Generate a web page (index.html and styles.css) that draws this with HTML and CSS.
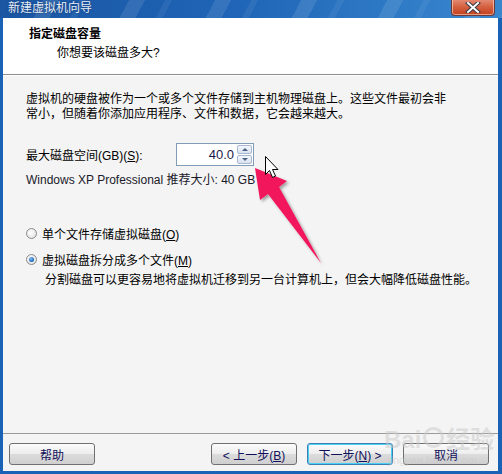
FILE: index.html
```html
<!DOCTYPE html>
<html lang="zh-CN">
<head>
    <meta charset="UTF-8">
    <title>新建虚拟机向导</title>
    <link rel="stylesheet" href="styles.css">
</head>
<body>
    <div class="window">
        <!-- Title bar -->
        <div class="titlebar">
            <span class="title">新建虚拟机向导</span>
            <span class="close">
                <svg width="16" height="11" viewBox="0 0 16 11">
                    <path d="M3 1 L13 10 M13 1 L3 10" stroke="#3a3a4a" stroke-width="4" stroke-linecap="square"/>
                    <path d="M3 1 L13 10 M13 1 L3 10" stroke="#fff" stroke-width="2" stroke-linecap="square"/>
                </svg>
            </span>
        </div>

        <div class="frame">
            <div class="header">
                <div class="header-title">指定磁盘容量</div>
                <div class="header-sub">你想要该磁盘多大?</div>
            </div>

            <div class="content">
                <div class="intro">
                    <div>虚拟机的硬盘被作为一个或多个文件存储到主机物理磁盘上。这些文件最初会非</div>
                    <div>常小，但随着你添加应用程序、文件和数据，它会越来越大。</div>
                </div>

                <div class="size-row">
                    <span class="label">最大磁盘空间(GB)(<u>S</u>):</span>
                    <div class="spin">
                        <span class="spin-value">40.0</span>
                        <div class="spin-buttons">
                            <span class="spin-btn up"></span>
                            <span class="spin-btn down"></span>
                        </div>
                    </div>
                </div>
                <div class="hint">Windows XP Professional 推荐大小: 40 GB</div>

                <div class="options">
                    <label class="radio"><span class="dot"></span><span>单个文件存储虚拟磁盘(<u>O</u>)</span></label>
                    <label class="radio checked"><span class="dot"></span><span>虚拟磁盘拆分成多个文件(<u>M</u>)</span></label>
                    <div class="option-note">分割磁盘可以更容易地将虚拟机迁移到另一台计算机上，但会大幅降低磁盘性能。</div>
                </div>
            </div>

            <div class="footer">
                <button class="btn">帮助</button>
                <div class="nav-buttons">
                    <button class="btn">&lt; 上一步(<u>B</u>)</button>
                    <button class="btn focused">下一步(<u>N</u>) &gt;</button>
                    <button class="btn">取消</button>
                </div>
            </div>
        </div>

        <!-- annotation arrow and mouse cursor drawn over the dialog -->
        <svg class="annotation" width="502" height="474" viewBox="0 0 502 474">
            <defs>
                <filter id="shade" x="-20%" y="-20%" width="140%" height="140%">
                    <feDropShadow dx="2" dy="2" stdDeviation="1.5" flood-color="#000" flood-opacity="0.35"/>
                </filter>
            </defs>
            <polygon points="255,168 287,181 279,187 321,263 268,194 260,200" fill="#f2145c" filter="url(#shade)"/>
            <path d="M265.5,156.5 L265.5,174.5 L269.5,170.5 L272.5,177.5 L275.5,176 L272.5,169.5 L278,169.5 Z" fill="#fff" stroke="#000" stroke-width="1"/>
        </svg>

        <div class="watermark">
            <span class="wm-logo">Bai<span class="paw"></span>经验</span>
            <span class="wm-url">jingyan.baidu.com</span>
        </div>
    </div>
</body>
</html>
```

FILE: styles.css
```css
html, body {
    margin: 0;
    padding: 0;
}
body {
    width: 502px;
    height: 474px;
    overflow: hidden;
    font-family: "Liberation Sans", "Noto Sans CJK SC", sans-serif;
    font-size: 12px;
    color: #000;
}
.window {
    position: relative;
    width: 502px;
    height: 474px;
    display: flex;
    flex-direction: column;
    background-color: #1a62b6;
}
.titlebar {
    height: 18px;
    display: flex;
    align-items: center;
    justify-content: space-between;
    padding: 0 7px 0 8px;
    background:
        repeating-linear-gradient(118deg, rgba(255,255,255,0) 0 38px, rgba(255,255,255,0.10) 38px 52px, rgba(255,255,255,0) 52px 70px, rgba(255,255,255,0.06) 70px 76px),
        linear-gradient(90deg, #1a56a2 0%, #1f64b6 45%, #2f7bc6 80%, #3a86cd 100%);
}
.title {
    color: #e6eef9;
    font-size: 12px;
    line-height: 14px;
    margin-top: -2px;
    text-shadow: 0 0 2px rgba(0, 0, 40, 0.5);
}
.close {
    align-self: flex-start;
    width: 42px;
    height: 16px;
    margin-top: -1px;
    display: flex;
    align-items: center;
    justify-content: center;
    border: 1px solid #6a3a3a;
    border-top: none;
    border-radius: 0 0 4px 4px;
    box-shadow: inset 0 0 0 1px rgba(255, 220, 200, 0.6);
    background: linear-gradient(#e58f78 0%, #d4603f 50%, #c2401f 100%);
}
.frame {
    flex: 1;
    display: flex;
    flex-direction: column;
    margin: 0 4px 3px 3px;
    background-color: #f4f4f4;
}
.header {
    height: 57px;
    background-color: #fff;
    border-bottom: 1px solid #8d8d8d;
    box-shadow: 0 1px 0 #fff;
    padding: 9px 0 0 26px;
    box-sizing: border-box;
}
.header-title {
    font-weight: bold;
    line-height: 15px;
    height: 19px;
}
.header-sub {
    padding-left: 28px;
    line-height: 15px;
}
.content {
    flex: 1;
    padding: 17px 0 0 23px;
}
.intro {
    line-height: 15px;
}
.size-row {
    display: flex;
    align-items: center;
    margin-top: 21px;
}
.label {
    width: 150px;
}
.spin {
    width: 76px;
    height: 21px;
    border: 1px solid #7f9db9;
    background-color: #fff;
    display: flex;
    align-items: center;
    justify-content: flex-end;
}
.spin-value {
    font-size: 13px;
    color: #1a1a4a;
    padding-right: 3px;
}
.spin-buttons {
    display: flex;
    flex-direction: column;
    gap: 1px;
    padding-right: 1px;
}
.spin-btn {
    position: relative;
    width: 15px;
    height: 9px;
    border: 1px solid #a8b8d0;
    border-radius: 2px;
    background: linear-gradient(#f4f7fc, #d8e2f0);
    box-sizing: border-box;
}
.spin-btn::after {
    content: "";
    position: absolute;
    left: 4px;
    border-left: 3px solid transparent;
    border-right: 3px solid transparent;
}
.spin-btn.up::after {
    top: 2px;
    border-bottom: 3px solid #4d6185;
}
.spin-btn.down::after {
    top: 2px;
    border-top: 3px solid #4d6185;
}
.hint {
    margin-top: 6px;
    line-height: 16px;
    color: #1a1a2a;
}
.options {
    margin-top: 37px;
}
.radio {
    display: flex;
    align-items: center;
    gap: 5px;
    height: 16px;
    margin-bottom: 10px;
}
.dot {
    width: 11px;
    height: 11px;
    border: 1px solid #8a8a8a;
    border-radius: 50%;
    background: radial-gradient(circle at 40% 40%, #fff 0%, #e6e6e6 70%, #cfcfcf 100%);
    box-sizing: border-box;
    position: relative;
}
.radio.checked .dot::after {
    content: "";
    position: absolute;
    left: 2px;
    top: 2px;
    width: 5px;
    height: 5px;
    border-radius: 50%;
    background: radial-gradient(circle at 40% 35%, #7ec0f0, #1761b8 70%, #0e3f86);
}
.option-note {
    line-height: 15px;
    padding-left: 19px;
    margin-top: -4px;
}
.footer {
    height: 38px;
    box-sizing: border-box;
    border-top: 1px solid #9a9a9a;
    display: flex;
    align-items: flex-start;
    justify-content: space-between;
    padding: 9px 9px 0 6px;
}
.nav-buttons {
    display: flex;
    gap: 10px;
}
.btn {
    width: 86px;
    height: 22px;
    padding: 0;
    font-family: "Liberation Sans", "Noto Sans CJK SC", sans-serif;
    font-size: 12px;
    color: #10105a;
    border: 1px solid #707070;
    border-radius: 3px;
    background: linear-gradient(#fbfbfb 0%, #ededed 50%, #dcdcdc 51%, #cfcfcf 100%);
}
.btn.focused {
    border-color: #3c7fb1;
    box-shadow: inset 0 0 0 1px #48d0f8;
}
.annotation {
    position: absolute;
    left: 0;
    top: 0;
    pointer-events: none;
}
.watermark {
    position: absolute;
    left: 384px;
    top: 426px;
    display: flex;
    flex-direction: column;
    color: rgba(200, 200, 200, 0.5);
    pointer-events: none;
}
.wm-logo {
    font-family: "Liberation Sans", "Noto Sans CJK SC", sans-serif;
    font-size: 24px;
    font-weight: bold;
    line-height: 28px;
}
.paw {
    display: inline-block;
    width: 15px;
    height: 15px;
    margin: 0 2px;
    border-radius: 50%;
    border: 3px solid rgba(200, 200, 200, 0.5);
}
.wm-url {
    font-size: 11px;
    line-height: 12px;
    padding-left: 4px;
}
```
